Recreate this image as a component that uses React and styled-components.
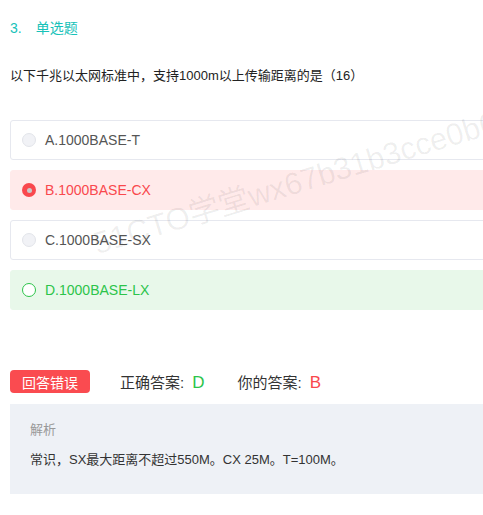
import React from "react";
import styled, { createGlobalStyle } from "styled-components";

// ------------------------------styles---------------------------------------
const GlobalStyle = createGlobalStyle`
  body {
    margin: 0;
    background: #fff;
    overflow: hidden;
    font-family: "Liberation Sans", "Noto Sans CJK SC", sans-serif;
  }
`;

const Page = styled.div`
  position: relative;
  width: 483px;
  height: 515px;
  overflow: hidden;
  padding: 18px 0 0 10px;
  box-sizing: border-box;
`;

const Content = styled.div`
  width: 540px;
`;

const Title = styled.div`
  font-size: 14px;
  line-height: 20px;
  color: #17c2b9;
  display: flex;
  gap: 14px;
`;

const Question = styled.div`
  margin-top: 28px;
  font-size: 13px;
  line-height: 20px;
  color: #222;
`;

const Options = styled.div`
  margin-top: 34px;
  display: flex;
  flex-direction: column;
  gap: 10px;
`;

const palette = {
  normal: { bg: "#fff", border: "#e6e8ef", color: "#555" },
  wrong: { bg: "#ffeaea", border: "#ffeaea", color: "#f9484d" },
  right: { bg: "#e8f8ea", border: "#e8f8ea", color: "#2cc44a" },
};

const Option = styled.div`
  height: 40px;
  box-sizing: border-box;
  display: flex;
  align-items: center;
  gap: 9px;
  padding-left: 11px;
  border-radius: 3px;
  border: 1px solid ${(p) => palette[p.state].border};
  background: ${(p) => palette[p.state].bg};
  color: ${(p) => palette[p.state].color};
  font-size: 14px;
`;

const Radio = styled.span`
  width: 14px;
  height: 14px;
  box-sizing: border-box;
  border-radius: 50%;
  display: flex;
  align-items: center;
  justify-content: center;
  border: ${(p) =>
    p.state === "right"
      ? "1.5px solid #2cc44a"
      : p.state === "wrong"
      ? "none"
      : "1px solid #e2e4ea"};
  background: ${(p) =>
    p.state === "right" ? "#fff" : p.state === "wrong" ? "#f9484d" : "#f1f2f6"};

  &::after {
    content: "";
    display: ${(p) => (p.state === "wrong" ? "block" : "none")};
    width: 5px;
    height: 5px;
    border-radius: 50%;
    background: #c9c9c9;
  }
`;

const ResultRow = styled.div`
  margin-top: 60px;
  display: flex;
  align-items: center;
  height: 23px;
  font-size: 15px;
  color: #333;
`;

const Badge = styled.span`
  width: 80px;
  height: 23px;
  border-radius: 4px;
  background: #fa4b50;
  color: #fff;
  font-size: 14px;
  display: flex;
  align-items: center;
  justify-content: center;
  margin-right: 30px;
`;

const AnswerItem = styled.span`
  margin-right: 33px;
  display: flex;
  align-items: baseline;
  gap: 8px;
`;

const AnswerLetter = styled.span`
  font-size: 17px;
  color: ${(p) => p.color};
`;

const Analysis = styled.div`
  margin-top: 11px;
  height: 90px;
  box-sizing: border-box;
  background: #eef1f6;
  padding: 17px 20px 0;
`;

const AnalysisLabel = styled.div`
  font-size: 13px;
  line-height: 18px;
  color: #999;
`;

const AnalysisText = styled.div`
  margin-top: 12px;
  font-size: 13px;
  line-height: 18px;
  color: #333;
`;

const Watermark = styled.div`
  position: absolute;
  left: 100px;
  top: 218px;
  font-size: 31px;
  color: rgba(0, 0, 0, 0.065);
  white-space: nowrap;
  transform: rotate(-17deg);
  transform-origin: left bottom;
  pointer-events: none;
`;
// ------------------------------styles---------------------------------------

const options = [
  { label: "A.1000BASE-T", state: "normal" },
  { label: "B.1000BASE-CX", state: "wrong" },
  { label: "C.1000BASE-SX", state: "normal" },
  { label: "D.1000BASE-LX", state: "right" },
];

const App = () => {
  return (
    <Page>
      <GlobalStyle />
      <Content>
        <Title>
          <span>3.</span>
          <span>单选题</span>
        </Title>
        <Question>以下千兆以太网标准中，支持1000m以上传输距离的是（16）</Question>

        <Options>
          {options.map((o) => (
            <Option key={o.label} state={o.state}>
              <Radio state={o.state} />
              {o.label}
            </Option>
          ))}
        </Options>

        <ResultRow>
          <Badge>回答错误</Badge>
          <AnswerItem>
            正确答案:<AnswerLetter color="#2cc44a">D</AnswerLetter>
          </AnswerItem>
          <AnswerItem>
            你的答案:<AnswerLetter color="#f9484d">B</AnswerLetter>
          </AnswerItem>
        </ResultRow>

        <Analysis>
          <AnalysisLabel>解析</AnalysisLabel>
          <AnalysisText>常识，SX最大距离不超过550M。CX 25M。T=100M。</AnalysisText>
        </Analysis>
      </Content>
      <Watermark>51CTO学堂wx67b31b3cce0b6</Watermark>
    </Page>
  );
};

export default App;
